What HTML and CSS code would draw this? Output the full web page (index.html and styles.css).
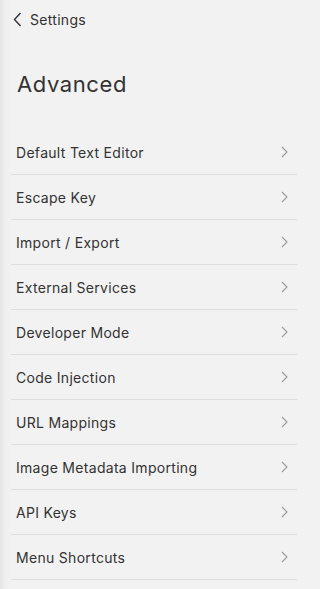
FILE: index.html
```html
<!DOCTYPE html>
<html>
<head>
<meta charset="utf-8">
<link rel="stylesheet" href="styles.css">
</head>
<body>
<div class="panel">
  <div class="back">
    <svg class="back-icon" width="9" height="15" viewBox="0 0 9 15"><path d="M7.5 1 L1.5 7.5 L7.5 14" fill="none" stroke="#333" stroke-width="1.4"/></svg>
    <span class="back-label">Settings</span>
  </div>
  <h1 class="title">Advanced</h1>
  <ul class="list">
    <li class="item"><span>Default Text Editor</span><svg class="chev" width="7" height="12" viewBox="0 0 7 12"><path d="M1 1 L6 6 L1 11" fill="none" stroke="#9a9a9a" stroke-width="1.1"/></svg></li>
    <li class="item"><span>Escape Key</span><svg class="chev" width="7" height="12" viewBox="0 0 7 12"><path d="M1 1 L6 6 L1 11" fill="none" stroke="#9a9a9a" stroke-width="1.1"/></svg></li>
    <li class="item"><span>Import / Export</span><svg class="chev" width="7" height="12" viewBox="0 0 7 12"><path d="M1 1 L6 6 L1 11" fill="none" stroke="#9a9a9a" stroke-width="1.1"/></svg></li>
    <li class="item"><span>External Services</span><svg class="chev" width="7" height="12" viewBox="0 0 7 12"><path d="M1 1 L6 6 L1 11" fill="none" stroke="#9a9a9a" stroke-width="1.1"/></svg></li>
    <li class="item"><span>Developer Mode</span><svg class="chev" width="7" height="12" viewBox="0 0 7 12"><path d="M1 1 L6 6 L1 11" fill="none" stroke="#9a9a9a" stroke-width="1.1"/></svg></li>
    <li class="item"><span>Code Injection</span><svg class="chev" width="7" height="12" viewBox="0 0 7 12"><path d="M1 1 L6 6 L1 11" fill="none" stroke="#9a9a9a" stroke-width="1.1"/></svg></li>
    <li class="item"><span>URL Mappings</span><svg class="chev" width="7" height="12" viewBox="0 0 7 12"><path d="M1 1 L6 6 L1 11" fill="none" stroke="#9a9a9a" stroke-width="1.1"/></svg></li>
    <li class="item"><span>Image Metadata Importing</span><svg class="chev" width="7" height="12" viewBox="0 0 7 12"><path d="M1 1 L6 6 L1 11" fill="none" stroke="#9a9a9a" stroke-width="1.1"/></svg></li>
    <li class="item"><span>API Keys</span><svg class="chev" width="7" height="12" viewBox="0 0 7 12"><path d="M1 1 L6 6 L1 11" fill="none" stroke="#9a9a9a" stroke-width="1.1"/></svg></li>
    <li class="item"><span>Menu Shortcuts</span><svg class="chev" width="7" height="12" viewBox="0 0 7 12"><path d="M1 1 L6 6 L1 11" fill="none" stroke="#9a9a9a" stroke-width="1.1"/></svg></li>
  </ul>
</div>
</body>
</html>
```
FILE: styles.css
```css
html, body {
  margin: 0;
  padding: 0;
  height: 100%;
}
body {
  background: linear-gradient(to right, #e4e4e4 0px, #eeeeee 5px, #f2f2f2 12px, #f2f2f2 100%);
  font-family: Inter, "Noto Sans", sans-serif;
  color: #333;
  -webkit-font-smoothing: antialiased;
  overflow: hidden;
}
.panel {
  width: 306px;
  height: 589px;
  overflow: hidden;
}
.back {
  display: flex;
  align-items: center;
  height: 38px;
  padding-left: 13px;
  gap: 8px;
}
.back-icon {
  display: block;
}
.back-label {
  font-size: 14px;
  letter-spacing: 0.3px;
  color: #333;
}
.title {
  margin: 32px 0 32px 17px;
  font-size: 22px;
  line-height: 28px;
  letter-spacing: 0.6px;
  font-weight: 400;
  color: #333;
}
.list {
  list-style: none;
  margin: 0 9px 0 11px;
  padding: 0;
}
.item {
  display: flex;
  align-items: center;
  justify-content: space-between;
  height: 44px;
  border-bottom: 1px solid #dedede;
  padding: 0 9px 0 5px;
  font-size: 14px;
  letter-spacing: 0.3px;
  color: #333;
}
.chev {
  display: block;
}
```
